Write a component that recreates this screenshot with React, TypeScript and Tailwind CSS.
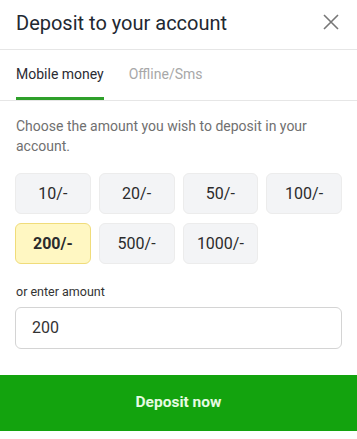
import React, { useState } from 'react';

const amounts = [10, 20, 50, 100, 200, 500, 1000];

export default function App() {
  const [tab, setTab] = useState<'mobile' | 'offline'>('mobile');
  const [amount, setAmount] = useState('200');

  return (
    <div className="w-[357px] h-[439px] bg-white font-['Roboto',sans-serif] flex flex-col">
      {/* Header */}
      <div className="h-[50px] flex items-center justify-between pl-4 pr-[18px] border-b border-[#e6e6e6]">
        <h2 className="text-[20px] text-[#222831] leading-none pb-[3px]">Deposit to your account</h2>
        <button className="text-[#777] -mt-[6px]" aria-label="Close">
          <svg width="16" height="16" viewBox="0 0 16 16" fill="none" stroke="currentColor" strokeWidth="1.6">
            <path d="M1 1L15 15M15 1L1 15" />
          </svg>
        </button>
      </div>

      {/* Tabs */}
      <div className="h-[51px] flex items-end gap-[25px] px-4 border-b border-[#e6e6e6]">
        <button
          onClick={() => setTab('mobile')}
          className={`h-full flex items-center text-[14px] border-b-[3px] pt-[2px] ${
            tab === 'mobile' ? 'border-[#2ea02a] text-[#2b2b33]' : 'border-transparent text-[#a8a8a8]'
          }`}
        >
          Mobile money
        </button>
        <button
          onClick={() => setTab('offline')}
          className={`h-full flex items-center text-[14px] border-b-[3px] pt-[2px] ${
            tab === 'offline' ? 'border-[#2ea02a] text-[#2b2b33]' : 'border-transparent text-[#a8a8a8]'
          }`}
        >
          Offline/Sms
        </button>
      </div>

      {/* Body */}
      <div className="px-[15px] pt-[15px]">
        <p className="text-[14px] leading-[20px] text-[#707070] pl-[1px]">
          Choose the amount you wish to deposit in your account.
        </p>

        <div className="grid grid-cols-4 gap-x-2 gap-y-[9px] mt-[17px]">
          {amounts.map((a) => {
            const active = String(a) === amount;
            return (
              <button
                key={a}
                onClick={() => setAmount(String(a))}
                className={`h-[41px] rounded-[6px] border text-[16px] ${
                  active
                    ? 'bg-[#fff7c2] border-[#f0dc7a] font-bold text-[#2b2b2b]'
                    : 'bg-[#f3f4f6] border-[#ececec] text-[#2b2b2b]'
                }`}
              >
                {a}/-
              </button>
            );
          })}
        </div>

        <label className="block text-[12.5px] text-[#333] mt-[22px] leading-none pl-[1px]">or enter amount</label>
        <input
          value={amount}
          onChange={(e) => setAmount(e.target.value)}
          className="mt-[8px] w-full h-[42px] rounded-[6px] border border-[#d4d4d4] px-4 text-[16px] text-[#333] outline-none"
        />
      </div>

      <button className="mt-[26px] h-[56px] w-full bg-[#13a30e] text-[#e6fbe2] font-bold text-[15.5px]">
        Deposit now
      </button>
    </div>
  );
}
